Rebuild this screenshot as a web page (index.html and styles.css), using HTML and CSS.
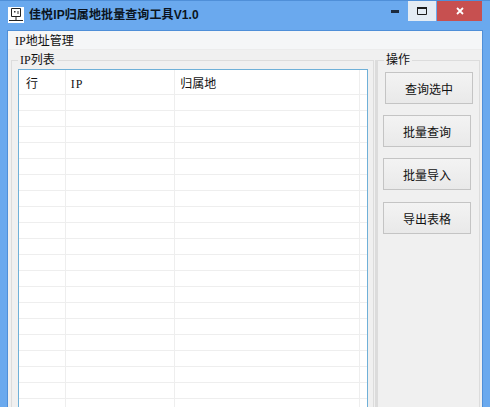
FILE: index.html
```html
<!DOCTYPE html>
<html lang="zh-CN">
  <head>
    <meta charset="UTF-8" />
    <title>佳悦IP归属地批量查询工具V1.0</title>
    <link rel="stylesheet" href="styles.css">
  </head>
  <body>
    <div class="titlebar">
      <svg class="app-icon" width="16" height="16" viewBox="0 0 16 16">
        <rect width="16" height="16" fill="#ffffff" />
        <path d="M3.5 1.5h9v8h-9z" fill="none" stroke="#222" />
        <path d="M8 10v3.5M1 13.5h14" stroke="#222" fill="none" />
        <path d="M6 4h1.5v1.5H6zM9.5 4h1v3h-1z" fill="#333" />
      </svg>
      <span class="title">佳悦IP归属地批量查询工具V1.0</span>
      <div class="win-buttons">
        <div class="win-btn">
          <svg width="8" height="3" viewBox="0 0 8 3"><rect width="8" height="3" fill="#1c2b3e" /></svg>
        </div>
        <div class="win-btn max">
          <svg width="10" height="8" viewBox="0 0 10 8"><path d="M.5 .5h9v7h-9z" fill="none" stroke="#1c1c1c" /><rect width="10" height="2" fill="#1c1c1c" /></svg>
        </div>
        <div class="win-btn close">
          <svg width="8" height="8" viewBox="0 0 8 8"><path d="M1 1l6 6M7 1l-6 6" stroke="#fff" stroke-width="1.8" /></svg>
        </div>
      </div>
    </div>
    <div class="client">
      <div class="menu">IP地址管理</div>
      <div class="content">
        <fieldset class="group list-group">
          <legend>IP列表</legend>
          <div class="list">
            <div class="row head">
              <div class="c1">行</div>
              <div class="c2">IP</div>
              <div class="c3">归属地</div>
              <div class="c4"></div>
            </div>
            <div class="row"><div class="c1"></div><div class="c2"></div><div class="c3"></div><div class="c4"></div></div>
            <div class="row"><div class="c1"></div><div class="c2"></div><div class="c3"></div><div class="c4"></div></div>
            <div class="row"><div class="c1"></div><div class="c2"></div><div class="c3"></div><div class="c4"></div></div>
            <div class="row"><div class="c1"></div><div class="c2"></div><div class="c3"></div><div class="c4"></div></div>
            <div class="row"><div class="c1"></div><div class="c2"></div><div class="c3"></div><div class="c4"></div></div>
            <div class="row"><div class="c1"></div><div class="c2"></div><div class="c3"></div><div class="c4"></div></div>
            <div class="row"><div class="c1"></div><div class="c2"></div><div class="c3"></div><div class="c4"></div></div>
            <div class="row"><div class="c1"></div><div class="c2"></div><div class="c3"></div><div class="c4"></div></div>
            <div class="row"><div class="c1"></div><div class="c2"></div><div class="c3"></div><div class="c4"></div></div>
            <div class="row"><div class="c1"></div><div class="c2"></div><div class="c3"></div><div class="c4"></div></div>
            <div class="row"><div class="c1"></div><div class="c2"></div><div class="c3"></div><div class="c4"></div></div>
            <div class="row"><div class="c1"></div><div class="c2"></div><div class="c3"></div><div class="c4"></div></div>
            <div class="row"><div class="c1"></div><div class="c2"></div><div class="c3"></div><div class="c4"></div></div>
            <div class="row"><div class="c1"></div><div class="c2"></div><div class="c3"></div><div class="c4"></div></div>
            <div class="row"><div class="c1"></div><div class="c2"></div><div class="c3"></div><div class="c4"></div></div>
            <div class="row"><div class="c1"></div><div class="c2"></div><div class="c3"></div><div class="c4"></div></div>
            <div class="row"><div class="c1"></div><div class="c2"></div><div class="c3"></div><div class="c4"></div></div>
            <div class="row"><div class="c1"></div><div class="c2"></div><div class="c3"></div><div class="c4"></div></div>
            <div class="row"><div class="c1"></div><div class="c2"></div><div class="c3"></div><div class="c4"></div></div>
            <div class="row"><div class="c1"></div><div class="c2"></div><div class="c3"></div><div class="c4"></div></div>
          </div>
        </fieldset>
        <fieldset class="group action-group">
          <legend>操作</legend>
          <button class="btn first">查询选中</button>
          <button class="btn">批量查询</button>
          <button class="btn">批量导入</button>
          <button class="btn">导出表格</button>
        </fieldset>
      </div>
    </div>
  </body>
</html>
```

FILE: styles.css
```css
* {
  margin: 0;
  padding: 0;
  box-sizing: border-box;
}

html {
  height: 407px;
  overflow: hidden;
}

body {
  width: 490px;
  height: 407px;
  overflow: hidden;
  background-color: #6aa9ee;
  font-family: "Liberation Serif", "Noto Sans CJK SC", serif;
  font-size: 12px;
  color: #111;
}

.titlebar {
  display: flex;
  align-items: flex-start;
  height: 30px;
  border-top: 1px solid #4f8fd8;
}

.app-icon {
  margin: 6px 0 0 8px;
}

.title {
  margin: 6px 0 0 5px;
  font-family: "Liberation Sans", "Noto Sans CJK SC", sans-serif;
  font-size: 12px;
  font-weight: bold;
  letter-spacing: 0.1px;
  line-height: 16px;
  color: #0b1420;
}

.win-buttons {
  display: flex;
  margin-left: auto;
  margin-right: 8px;
}

.win-btn {
  display: flex;
  align-items: center;
  justify-content: center;
  width: 27px;
  height: 20px;
}

.win-btn.max {
  width: 28px;
  background-color: #e4ecf4;
}

.win-btn.close {
  width: 45px;
  margin-left: 1px;
  background-color: #c75050;
}

.client {
  height: 377px;
  margin: 0 7px;
  border: 1px solid #4f8fd8;
  border-bottom: none;
  background-color: #f0f0f0;
  overflow: hidden;
}

.menu {
  height: 19px;
  padding: 2px 0 0 7px;
  background-color: #f5f6f7;
  border-bottom: 1px solid #ececec;
  line-height: 16px;
}

.content {
  display: flex;
  height: 357px;
  padding-left: 3px;
}

.group {
  height: 354px;
  border: 1px solid #dcdcdc;
  border-bottom: none;
  border-radius: 0;
}

.group legend {
  line-height: 14px;
  padding: 0 2px;
}

.list-group {
  width: 363px;
  margin-top: 3px;
  padding: 2px 0 0 6px;
}

.action-group {
  width: 105px;
  margin-top: 3px;
  margin-left: 1px;
  border-left-width: 3px;
  padding: 5px 0 0 5px;
}

.action-group legend {
  margin-left: 1px;
}

.list {
  width: 350px;
  height: 338px;
  border: 1px solid #6fb0d8;
  border-bottom: none;
  background-color: #fff;
  overflow: hidden;
}

.row {
  display: flex;
  height: 16px;
  border-bottom: 1px solid #eeeeee;
}

.row.head {
  height: 25px;
  line-height: 28px;
}

.row div {
  border-right: 1px solid #eeeeee;
  padding-left: 7px;
}

.c1 {
  width: 47px;
}

.c2 {
  width: 110px;
  letter-spacing: 1px;
}

.row .c2 {
  padding-left: 5px;
}

.c3 {
  width: 186px;
}

.row .c3 {
  padding-left: 5px;
}

.c4 {
  flex: 1;
}

.row .c4 {
  border-right: none;
}

.btn {
  display: block;
  width: 88px;
  height: 32px;
  margin-bottom: 11px;
  border: 1px solid #c4c4c4;
  background: linear-gradient(#f3f3f3, #e9e9e9);
  font-family: "Noto Sans CJK SC", sans-serif;
  font-size: 12px;
  color: #111;
}

.btn.first {
  margin-left: 2px;
}

.btn:last-child {
  margin-top: 12px;
}
```
